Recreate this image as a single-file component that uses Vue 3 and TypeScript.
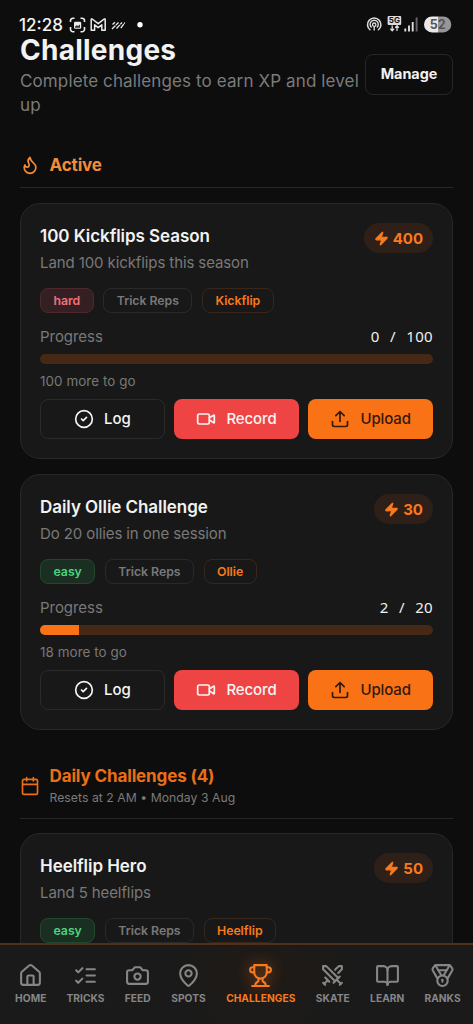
<script setup lang="ts">
interface Challenge {
  title: string
  description: string
  xp: number
  difficulty: 'easy' | 'hard'
  trick: string
  done: number
  total: number
  tracked: boolean
}

interface NavItem {
  label: string
  paths: string[]
  active?: boolean
}

const active: Challenge[] = [
  { title: '100 Kickflips Season', description: 'Land 100 kickflips this season', xp: 400, difficulty: 'hard', trick: 'Kickflip', done: 0, total: 100, tracked: true },
  { title: 'Daily Ollie Challenge', description: 'Do 20 ollies in one session', xp: 30, difficulty: 'easy', trick: 'Ollie', done: 2, total: 20, tracked: true },
]

const daily: Challenge[] = [
  { title: 'Heelflip Hero', description: 'Land 5 heelflips', xp: 50, difficulty: 'easy', trick: 'Heelflip', done: 0, total: 5, tracked: false },
]

const sections = [
  { id: 'active', title: 'Active', note: '', items: active },
  { id: 'daily', title: 'Daily Challenges (4)', note: 'Resets at 2 AM • Monday 3 Aug', items: daily },
]

const flame = 'M8.5 14.5A2.5 2.5 0 0 0 11 12c0-1.38-.5-2-1-3-1.072-2.143-.224-4.054 2-6 .5 2.5 2 4.9 4 6.5 2 1.6 3 3.5 3 5.5a7 7 0 1 1-14 0c0-1.153.433-2.294 1-3a2.5 2.5 0 0 0 2.5 2.5z'
const calendar = 'M8 2v4M16 2v4M5 4h14a2 2 0 0 1 2 2v14a2 2 0 0 1-2 2H5a2 2 0 0 1-2-2V6a2 2 0 0 1 2-2zM3 10h18'
const zap = 'M4 14a1 1 0 0 1-.78-1.63l9.9-10.2a.5.5 0 0 1 .86.46l-1.92 6.02A1 1 0 0 0 13 10h7a1 1 0 0 1 .78 1.63l-9.9 10.2a.5.5 0 0 1-.86-.46l1.92-6.02A1 1 0 0 0 11 14z'

const nav: NavItem[] = [
  { label: 'HOME', paths: ['M15 21v-8a1 1 0 0 0-1-1h-4a1 1 0 0 0-1 1v8', 'M3 10a2 2 0 0 1 .709-1.528l7-5.999a2 2 0 0 1 2.582 0l7 5.999A2 2 0 0 1 21 10v9a2 2 0 0 1-2 2H5a2 2 0 0 1-2-2z'] },
  { label: 'TRICKS', paths: ['m3 17 2 2 4-4', 'm3 7 2 2 4-4', 'M13 6h8', 'M13 12h8', 'M13 18h8'] },
  { label: 'FEED', paths: ['M14.5 4h-5L7 7H4a2 2 0 0 0-2 2v9a2 2 0 0 0 2 2h16a2 2 0 0 0 2-2V9a2 2 0 0 0-2-2h-3z', 'M15 13a3 3 0 1 1-6 0 3 3 0 0 1 6 0z'] },
  { label: 'SPOTS', paths: ['M20 10c0 4.993-5.539 10.193-7.399 11.799a1 1 0 0 1-1.202 0C9.539 20.193 4 14.993 4 10a8 8 0 0 1 16 0', 'M15 10a3 3 0 1 1-6 0 3 3 0 0 1 6 0z'] },
  { label: 'CHALLENGES', active: true, paths: ['M6 9H4.5a2.5 2.5 0 0 1 0-5H6', 'M18 9h1.5a2.5 2.5 0 0 0 0-5H18', 'M4 22h16', 'M10 14.66V17c0 .55-.47.98-.97 1.21C7.85 18.75 7 20.24 7 22', 'M14 14.66V17c0 .55.47.98.97 1.21C16.15 18.75 17 20.24 17 22', 'M18 2H6v7a6 6 0 0 0 12 0V2Z'] },
  { label: 'SKATE', paths: ['M14.5 17.5 3 6V3h3l11.5 11.5', 'm13 19 6-6', 'm16 16 4 4', 'm19 21 2-2', 'M14.5 6.5 18 3h3v3l-3.5 3.5', 'm5 14 4 4', 'm7 17-3 3', 'm3 19 2 2'] },
  { label: 'LEARN', paths: ['M12 7v14', 'M3 18a1 1 0 0 1-1-1V4a1 1 0 0 1 1-1h5a4 4 0 0 1 4 4 4 4 0 0 1 4-4h5a1 1 0 0 1 1 1v13a1 1 0 0 1-1 1h-6a3 3 0 0 0-3 3 3 3 0 0 0-3-3z'] },
  { label: 'RANKS', paths: ['M7.21 15 2.66 7.14a2 2 0 0 1 .13-2.2L4.4 2.8A2 2 0 0 1 6 2h12a2 2 0 0 1 1.6.8l1.6 2.14a2 2 0 0 1 .14 2.2L16.79 15', 'M11 12 5.12 2.2', 'm13 12 5.88-9.8', 'M8 7h8', 'M17 17a5 5 0 1 1-10 0 5 5 0 0 1 10 0z', 'M12 18v-2h-.5'] },
]
</script>

<template>
  <div class="screen">
    <header class="status">
      <span class="clock">12:28</span>
      <svg class="s-left" viewBox="0 0 76 20" fill="none" stroke="#ededed">
        <path d="M5.5 3.2H4A2.5 2.5 0 0 0 1.5 5.700V7M11.500 3.200H13A2.500 2.500 0 0 1 15.500 5.700V7M1.500 12V14.200A2.500 2.500 0 0 0 4 16.700H5.500M11.500 16.700H13A2.500 2.500 0 0 0 15.500 14.200V12" stroke-width="1.6" />
        <rect x="5" y="6.700" width="7.200" height="7" rx="1.300" fill="#ededed" stroke="none" />
        <path d="M6 11.500l1.800-1.300 1.200.7 2-1.500v3.300H6z" fill="#333" stroke="none" />
        <path d="M22.200 4.500Q22.200 3.700 23.200 4L29.200 8.700 35.200 4Q36.200 3.700 36.200 4.500V15.200H32.800V9.800L29.200 12.600 25.600 9.800V15.200H22.200Z" stroke-width="1.500" stroke-linejoin="round" />
        <path d="M43.500 9.500l2.500-2.200M43 14l6.500-6.500M47.500 13.500l5.500-6M51.800 13.200l4-5.500" stroke-width="1.300" stroke-dasharray="5 .6" />
        <circle cx="71" cy="9.800" r="2.700" fill="#fff" stroke="none" />
      </svg>
      <svg class="s-right" viewBox="0 0 90 20" fill="none" stroke="#dcdcdc">
        <path d="M4.400 16.200A6.700 6.700 0 1 1 12 16.200" stroke-width="1.600" />
        <path d="M5.600 13.500A4.100 4.100 0 1 1 10.800 13.500" stroke-width="1.400" />
        <circle cx="8.200" cy="10.700" r="1.700" stroke-width="1.300" />
        <path d="M8.200 12.500v4" stroke-width="1.400" />
        <rect x="21.600" y="2" width="13.600" height="9" rx="1" fill="#dcdcdc" stroke="none" />
        <text x="28.400" y="9.400" class="fiveg">5G</text>
        <path d="M26.200 11.500v5M24.400 14.700l1.800 2 1.800-2M31 17v-5M29.200 13.800l1.800-2 1.800 2" stroke-width="1.300" />
        <path d="M39.300 17.500v-3M43 17.500v-6M46.700 17.500v-9.500" stroke-width="1.900" />
        <path d="M50.600 17.500V3.400" stroke="#666" stroke-width="1.900" />
        <path d="M72 2.400h5.300a8 8 0 0 1 0 16H72z" fill="#969696" stroke="none" />
        <path d="M72 2.400h-6a8 8 0 0 0 0 16h6z" fill="#e8e8e8" stroke="none" />
        <text x="71.700" y="14.800" class="batt">52</text>
      </svg>
    </header>

    <main class="page">
      <div class="intro">
        <div class="intro-text">
          <h1>Challenges</h1>
          <p>Complete challenges to earn XP and level up</p>
        </div>
        <button class="manage">Manage</button>
      </div>

      <section v-for="s in sections" :key="s.id" :class="['section', s.id]">
        <div class="section-head">
          <svg class="icon" viewBox="0 0 24 24"><path :d="s.id === 'active' ? flame : calendar" /></svg>
          <div>
            <h2>{{ s.title }}</h2>
            <p v-if="s.note">{{ s.note }}</p>
          </div>
        </div>

        <article v-for="c in s.items" :key="c.title" class="card">
          <div class="top">
            <div class="heading">
              <h3>{{ c.title }}</h3>
              <p class="desc">{{ c.description }}</p>
            </div>
            <span class="xp"><svg class="zap" viewBox="0 0 24 24"><path :d="zap" /></svg>{{ c.xp }}</span>
          </div>
          <div class="tags">
            <span :class="['tag', c.difficulty]">{{ c.difficulty }}</span>
            <span class="tag">Trick Reps</span>
            <span class="tag trick">{{ c.trick }}</span>
          </div>
          <template v-if="c.tracked">
            <div class="progress-label">
              <span>Progress</span>
              <span class="count">{{ c.done }} <i>/</i> {{ c.total }}</span>
            </div>
            <div class="bar"><div class="fill" :style="{ width: (c.done / c.total) * 100 + '%' }"></div></div>
            <p class="left">{{ c.total - c.done }} more to go</p>
            <div class="actions">
              <button class="btn log">
                <svg class="icon" viewBox="0 0 24 24"><circle cx="12" cy="12" r="10" /><path d="m9 12 2 2 4-4" /></svg>Log
              </button>
              <button class="btn record">
                <svg class="icon" viewBox="0 0 24 24"><path d="m16 13 5.223 3.482a.5.5 0 0 0 .777-.416V7.870a.5.5 0 0 0-.752-.432L16 10.500" /><rect x="2" y="6" width="14" height="12" rx="2" /></svg>Record
              </button>
              <button class="btn upload">
                <svg class="icon" viewBox="0 0 24 24"><path d="M21 15v4a2 2 0 0 1-2 2H5a2 2 0 0 1-2-2v-4M17 8l-5-5-5 5M12 3v12" /></svg>Upload
              </button>
            </div>
          </template>
        </article>
      </section>
    </main>

    <nav class="tabs">
      <a v-for="n in nav" :key="n.label" :class="['tab', { on: n.active }]">
        <svg class="icon" viewBox="0 0 24 24"><path v-for="p in n.paths" :key="p" :d="p" /></svg>
        <span>{{ n.label }}</span>
      </a>
    </nav>
  </div>
</template>

<style>
html, body { background: #0d0d0d; }
</style>

<style scoped>
* { box-sizing: border-box; margin: 0; }
.screen {
  position: relative;
  width: 473px;
  height: 1024px;
  overflow: hidden;
  background: #0d0d0d;
  color: #f2f2f2;
  font-family: Inter, "Noto Sans", sans-serif;
}
.icon {
  flex: none;
  display: block;
  width: 20px;
  height: 20px;
  fill: none;
  stroke: currentColor;
  stroke-width: 2;
  stroke-linecap: round;
  stroke-linejoin: round;
}
.status {
  position: absolute;
  inset: 0 0 auto 0;
  height: 40px;
  padding: 15px 17px 0 19px;
  display: flex;
  align-items: flex-start;
}
.clock { font: 500 17px/20px Inter, sans-serif; width: 50px; white-space: nowrap; }
.s-left { width: 76px; height: 20px; }
.s-right { width: 90px; height: 20px; margin-left: auto; margin-top: -1px; }
.fiveg { font: 700 8px Inter, sans-serif; fill: #111; stroke: none; text-anchor: middle; }
.batt { font: 700 12.5px Inter, sans-serif; fill: #555; stroke: none; text-anchor: middle; }

.page { padding: 32px 20px 0; }
.intro { display: flex; height: 86px; }
.intro-text { width: 345px; }
h1 { font-size: 28px; line-height: 36px; font-weight: 700; height: 37px; letter-spacing: .25px; }
.intro p { font-size: 17px; line-height: 24px; letter-spacing: .12px; color: #7b7b7b; }
.manage {
  flex: none;
  width: 88px;
  height: 40.500px;
  margin-top: 22px;
  padding: 0;
  border: 1px solid #262626;
  border-radius: 8px;
  background: transparent;
  color: #f2f2f2;
  font: 700 14.400px/20px Inter, sans-serif;
}
.section-head {
  display: flex;
  align-items: center;
  gap: 9.500px;
  border-bottom: 1px solid #272727;
  margin-bottom: 15px;
}
.active .section-head { margin-top: 35px; height: 35px; padding-bottom: 10px; color: #f28c38; }
.daily .section-head { margin-top: 33px; height: 56px; margin-bottom: 14px; padding-bottom: 10px; color: #ea6f17; }
h2 { font-size: 17px; line-height: 24px; font-weight: 700; letter-spacing: -.13px; white-space: nowrap; }
.section-head p { padding-top: 1px; font-size: 12.200px; line-height: 18px; letter-spacing: .05px; color: #7b7b7b; }
.card {
  height: 256px;
  margin-bottom: 15px;
  padding: 19px 19px 0;
  border: 1px solid #282828;
  border-radius: 20px;
  background: #181818;
}
.top { display: flex; justify-content: space-between; height: 64.500px; }
.heading { padding-top: 1px; }
h3 { font-size: 17px; line-height: 25px; font-weight: 600; letter-spacing: -.05px; white-space: nowrap; }
.desc { margin-top: 4px; font-size: 15px; line-height: 20px; letter-spacing: -.1px; color: #797979; }
.xp {
  display: flex;
  align-items: center;
  gap: 4px;
  height: 30px;
  padding: 0 10px;
  border-radius: 15px;
  background: #2e2018;
  color: #f97a1c;
  font-size: 15px;
  font-weight: 700;
}
.zap { width: 15px; height: 15px; fill: currentColor; stroke: currentColor; stroke-width: 2; stroke-linejoin: round; }
.tags { display: flex; gap: 9.500px; height: 25.500px; }
.tag {
  padding: 0 12.500px;
  border: 1px solid #292929;
  border-radius: 8px;
  font-size: 12.300px;
  font-weight: 600;
  line-height: 23.500px;
  letter-spacing: -.03px;
  color: #797979;
  white-space: nowrap;
}
.hard { background: #342022; border-color: #4d292b; color: #f0707a; }
.easy { background: #1b2e22; border-color: #21482f; color: #4cd480; }
.trick { border-color: #38261a; color: #f97a1c; }
.progress-label { display: flex; justify-content: space-between; margin-top: 14px; height: 26.500px; font-size: 15px; line-height: 20px; letter-spacing: -.05px; color: #797979; }
.count { margin-top: -1px; font-family: "Noto Sans", sans-serif; color: #f0f0f0; letter-spacing: .300px; word-spacing: 4.700px; }
.count i { font-style: normal; padding: 0 1.500px; }
.bar { height: 10px; border-radius: 5px; overflow: hidden; background: #452816; }
.fill { height: 100%; background: #f97316; }
.left { margin-top: 8px; height: 27px; font-size: 13.400px; line-height: 19px; letter-spacing: .08px; color: #797979; }
.actions { display: grid; grid-template-columns: repeat(3, 1fr); gap: 9.500px; }
.btn {
  display: flex;
  align-items: center;
  justify-content: center;
  gap: 10px;
  height: 40px;
  padding: 0;
  border: 0;
  border-radius: 8px;
  font: 500 15px/20px Inter, sans-serif;
  letter-spacing: -.1px;
  color: #f5f5f5;
}
.log { background: transparent; border: 1px solid #2a2a2a; }
.record { background: #ef4444; }
.upload { background: #f97316; color: #34180a; }

.tabs {
  position: absolute;
  left: 0;
  right: 0;
  bottom: 0;
  height: 81px;
  padding: 18px 0 0 15px;
  display: grid;
  grid-template-columns: 31.500px 38px 26.500px 35px 69.500px 34.500px 34.500px 36px;
  column-gap: 20px;
  align-content: start;
  border-top: 2px solid #50301c;
  background: radial-gradient(ellipse 90px 60px at 261px 30px, #211a16, #1a1a1a);
  color: #868686;
}
.tab { display: flex; flex-direction: column; align-items: center; }
.tab .icon { width: 25px; height: 25px; }
.tab span { margin-top: 2.500px; font-size: 10.200px; line-height: 15px; font-weight: 700; letter-spacing: .05px; white-space: nowrap; }
.on { color: #f97a1c; }
.on .icon { filter: drop-shadow(0 0 7px rgba(249, 115, 22, .6)); }
</style>
